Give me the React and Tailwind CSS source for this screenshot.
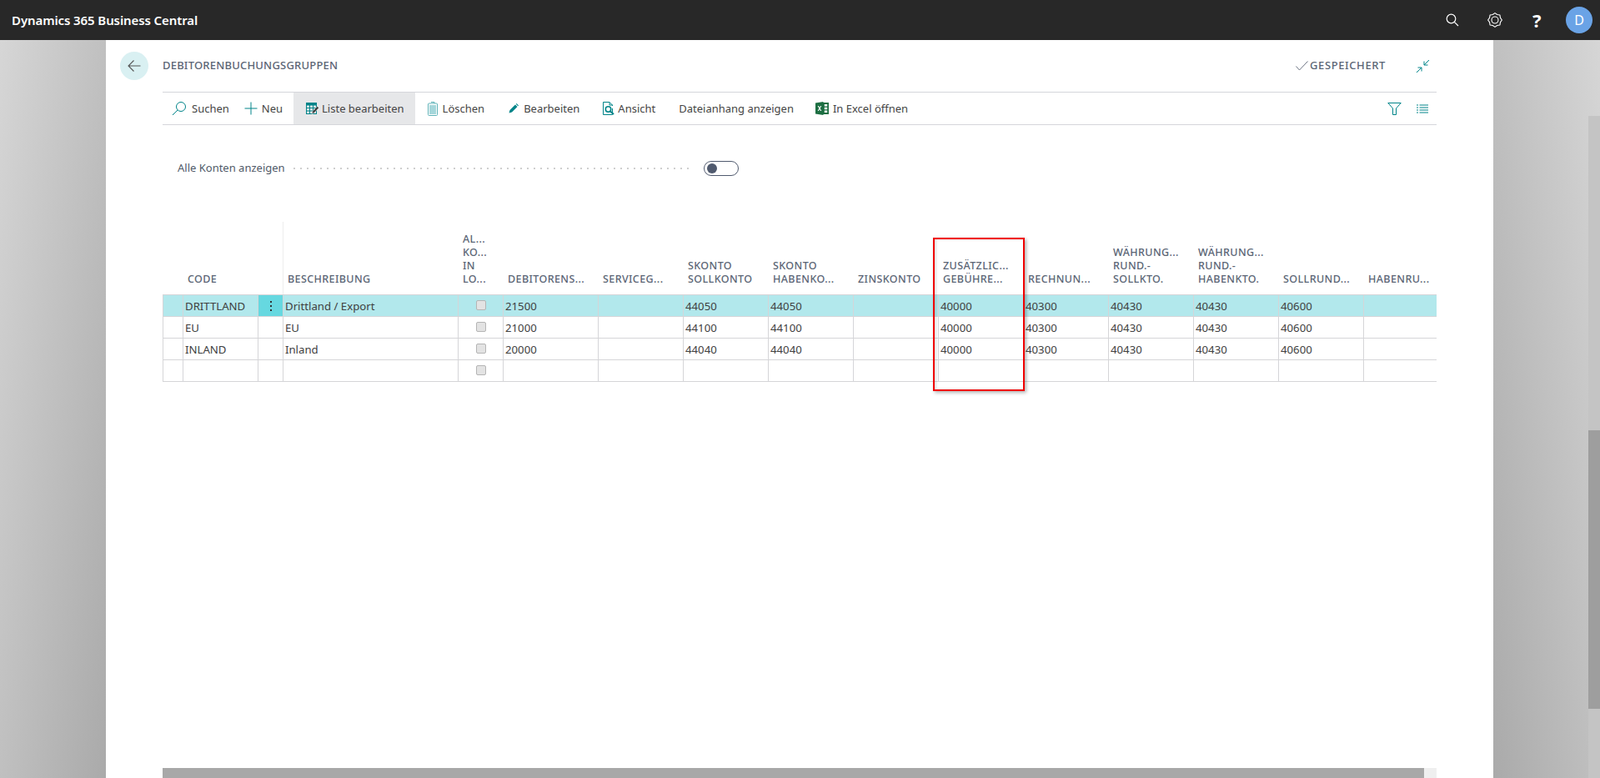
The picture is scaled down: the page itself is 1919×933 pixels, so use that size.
const teal = "#008489";

function SearchIcon() {
  return (
    <svg width="18" height="18" viewBox="0 0 18 18" fill="none" stroke={teal} strokeWidth="1">
      <circle cx="11" cy="7" r="5.5" />
      <path d="M7 11 L1 17" />
    </svg>
  );
}
function PlusIcon() {
  return (
    <svg width="16" height="16" viewBox="0 0 16 16" fill="none" stroke={teal} strokeWidth="1">
      <path d="M8 0.5 V15.5 M0.5 8 H15.5" />
    </svg>
  );
}
function EditListIcon() {
  return (
    <svg width="16" height="15" viewBox="0 0 16 15" fill="none">
      <rect x="0.5" y="0.5" width="12" height="13" fill="none" stroke={teal} />
      <rect x="0" y="0" width="13" height="3.5" fill={teal} />
      <path d="M0.5 6.5 H12 M0.5 10 H8 M4.5 3 V14 M8.5 3 V10" stroke={teal} />
      <path d="M7 13.5 L7.8 10.5 L13.5 4.5 L15.5 6.3 L9.8 12.5 Z" fill="#404040" stroke="#fff" strokeWidth="0.5" />
    </svg>
  );
}
function TrashIcon() {
  return (
    <svg width="12" height="18" viewBox="0 0 12 18" fill="none">
      <path d="M4 1.5 H8 V3" stroke="#5fb3b8" />
      <rect x="0.5" y="3" width="11" height="14.5" rx="1" stroke="#5fb3b8" />
      <rect x="2" y="5" width="8" height="11" fill="#a5d6da" />
    </svg>
  );
}
function PenIcon() {
  return (
    <svg width="12" height="12" viewBox="0 0 12 12" fill={teal}>
      <path d="M0.5 11.5 L1.5 8 L8 1.5 L10.5 4 L4 10.5 Z" />
      <path d="M8.8 0.8 L9.6 0 L12 2.4 L11.2 3.2 Z" />
    </svg>
  );
}
function ViewIcon() {
  return (
    <svg width="15" height="16" viewBox="0 0 15 16" fill="none" stroke={teal}>
      <path d="M11.5 8 V15.5 H0.5 V0.5 H8 L11.5 4 V5" />
      <path d="M8 0.5 V4 H11.5" />
      <circle cx="6.5" cy="9" r="3.2" strokeWidth="1.6" />
      <path d="M9 11.5 L13 15" strokeWidth="2" />
    </svg>
  );
}
function ExcelIcon() {
  return (
    <svg width="16" height="16" viewBox="0 0 16 16">
      <rect x="9" y="1" width="7" height="14" fill="#1d6f42" />
      <path d="M10.8 3 H14.2 V5.5 H10.8 Z M10.8 6.8 H14.2 V9.3 H10.8 Z M10.8 10.5 H14.2 V13 H10.8 Z" fill="#fff" />
      <path d="M0 1.5 L9.5 0 V16 L0 14.5 Z" fill="#1d6f42" />
      <path d="M2.7 5 L4 5 L5 7 L6.1 5 L7.3 5 L5.7 8 L7.3 11 L6 11 L5 9 L3.9 11 L2.7 11 L4.3 8 Z" fill="#fff" />
    </svg>
  );
}
function FilterIcon() {
  return (
    <svg width="17" height="15" viewBox="0 0 17 15" fill="none" stroke={teal}>
      <path d="M0.8 0.5 H16.2 L10.5 7 V14.5 H6.5 V7 Z" />
    </svg>
  );
}
function ListIcon() {
  return (
    <svg width="14" height="11" viewBox="0 0 14 11" fill="none" stroke={teal}>
      <path d="M0 1 H2 M3.5 1 H14 M0 4 H2 M3.5 4 H14 M0 7 H2 M3.5 7 H14 M0 10 H2 M3.5 10 H14" />
    </svg>
  );
}
function CollapseIcon() {
  return (
    <svg width="17" height="17" viewBox="0 0 17 17" fill="none" stroke={teal}>
      <path d="M16 1 L10 7 M10 2.5 V7 H14.5" />
      <path d="M1 16 L7 10 M2.5 10 H7 V14.5" />
    </svg>
  );
}
function GearIcon() {
  const pts = [];
  for (let i = 0; i < 16; i++) {
    const a = (i * Math.PI) / 8;
    const r = i % 2 === 0 ? 8.4 : 7;
    pts.push([9 + r * Math.cos(a), 9 + r * Math.sin(a)]);
  }
  let d = `M${pts[0][0].toFixed(2)} ${pts[0][1].toFixed(2)}`;
  for (let i = 1; i <= 16; i++) {
    const p = pts[i % 16];
    d += ` L${p[0].toFixed(2)} ${p[1].toFixed(2)}`;
  }
  return (
    <svg width="18" height="18" viewBox="0 0 18 18" fill="none" stroke="#fff" strokeWidth="1.1" strokeLinejoin="round">
      <path d={d + " Z"} />
      <circle cx="9" cy="9" r="4" />
    </svg>
  );
}

const tools = [
  { label: "Suchen", icon: <SearchIcon />, cls: "pl-[11px] pr-0 gap-[6px]" },
  { label: "Neu", icon: <PlusIcon />, cls: "pl-[18px] pr-[13px] gap-[5px]" },
  { label: "Liste bearbeiten", icon: <EditListIcon />, cls: "pl-[15px] pr-[13px] gap-[3px] bg-[#e6e7e9]" },
  { label: "Löschen", icon: <TrashIcon />, cls: "pl-[15px] pr-[14px] gap-[6px]" },
  { label: "Bearbeiten", icon: <PenIcon />, cls: "pl-[15px] pr-[14px] gap-[6px]" },
  { label: "Ansicht", icon: <ViewIcon />, cls: "pl-[14px] pr-[14px] gap-[3px]" },
  { label: "Dateianhang anzeigen", icon: null, cls: "pl-[14px] pr-[14px]" },
  { label: "In Excel öffnen", icon: <ExcelIcon />, cls: "pl-[12px] pr-[14px] gap-[5px]" },
];

const columns = [
  { w: "w-[25px]", lines: [] },
  { w: "w-[90px]", lines: ["CODE"] },
  { w: "w-[30px]", lines: [] },
  { w: "w-[210px]", lines: ["BESCHREIBUNG"] },
  { w: "w-[54px]", lines: ["AL...", "KO...", "IN", "LO..."] },
  { w: "w-[114px]", lines: ["DEBITORENS..."] },
  { w: "w-[102px]", lines: ["SERVICEG..."] },
  { w: "w-[102px]", lines: ["SKONTO", "SOLLKONTO"] },
  { w: "w-[102px]", lines: ["SKONTO", "HABENKO..."] },
  { w: "w-[102px]", lines: ["ZINSKONTO"] },
  { w: "w-[102px]", lines: ["ZUSÄTZLIC...", "GEBÜHRE..."] },
  { w: "w-[102px]", lines: ["RECHNUN..."] },
  { w: "w-[102px]", lines: ["WÄHRUNG...", "RUND.-", "SOLLKTO."] },
  { w: "w-[102px]", lines: ["WÄHRUNG...", "RUND.-", "HABENKTO."] },
  { w: "w-[102px]", lines: ["SOLLRUND..."] },
  { w: "w-[87px]", lines: ["HABENRU..."] },
];

const rows = [
  ["DRITTLAND", "Drittland / Export", "21500", "", "44050", "44050", "", "40000", "40300", "40430", "40430", "40600", ""],
  ["EU", "EU", "21000", "", "44100", "44100", "", "40000", "40300", "40430", "40430", "40600", ""],
  ["INLAND", "Inland", "20000", "", "44040", "44040", "", "40000", "40300", "40430", "40430", "40600", ""],
  ["", "", "", "", "", "", "", "", "", "", "", "", ""],
];

function Row({ row, selected }) {
  const values = [null, row[0], "menu", row[1], "check", ...row.slice(2)];
  return (
    <div className={`flex h-[26px] border-b border-[#d5d5d8] text-[13.2px] text-[#404040] ${selected ? "bg-[#b2e8ec] text-[#303030]" : ""}`}>
      {columns.map((c, i) => {
        const v = values[i];
        const last = i === columns.length - 1;
        return (
          <div key={i} className={`${c.w} shrink-0 h-full flex items-center pl-[2px] pt-[2px] whitespace-nowrap ${last ? "" : "border-r"} ${i === 0 ? "border-l" : ""} border-[#d5d5d8] ${selected && v === "menu" ? "bg-[#66d8e0]" : ""}`}>
            {v === "menu" ? (
              selected ? (
                <div className="w-full flex flex-col items-center gap-[3px] pr-[2px] -mt-[2px]">
                  <span className="w-[2px] h-[2px] bg-[#333]" />
                  <span className="w-[2px] h-[2px] bg-[#333]" />
                  <span className="w-[2px] h-[2px] bg-[#333]" />
                </div>
              ) : null
            ) : v === "check" ? (
              <div className="w-full flex justify-center pr-[2px] -mt-[3px]">
                <span className="block w-[12px] h-[12px] rounded-[2px] bg-[#e3e3e3] border border-[#b5b5b5]" />
              </div>
            ) : (
              v
            )}
          </div>
        );
      })}
    </div>
  );
}

export default function App() {
  return (
    <div className="relative h-[933px] w-full overflow-hidden flex flex-col font-['Open_Sans','Liberation_Sans',sans-serif]">
      <header className="h-[48px] shrink-0 bg-[#282828] flex items-center text-white">
        <div className="pl-[14px] text-[15px] font-semibold font-['Open_Sans',sans-serif] tracking-[-0.1px]">Dynamics 365 Business Central</div>
        <div className="ml-auto flex items-center">
          <svg width="16" height="16" viewBox="0 0 16 16" fill="none" stroke="#fff" strokeWidth="1.2">
            <circle cx="6.5" cy="6.5" r="5.3" />
            <path d="M10.3 10.3 L15 15" />
          </svg>
          <div className="ml-[34px]"><GearIcon /></div>
          <div className="ml-[36px] w-[10px] text-[22px] leading-none font-bold">?</div>
          <div className="ml-[30px] mr-[9px] w-[32px] h-[32px] rounded-full bg-[#6aa3e6] flex items-center justify-center text-[16px]">D</div>
        </div>
      </header>

      <div className="flex flex-1 min-h-0">
        <div className="w-[127px] shrink-0 bg-linear-to-br from-[#d6d6d6] to-[#aaaaaa]" />
        <main className="flex-1 min-w-0 bg-white flex flex-col pl-[17px] pr-[68px]">
          <div className="h-[62px] shrink-0 flex items-center">
            <div className="w-[34px] h-[34px] rounded-full bg-[#d9f0f2] flex items-center justify-center">
              <svg width="16" height="14" viewBox="0 0 16 14" fill="none" stroke="#555" strokeWidth="1.1">
                <path d="M15.5 7 H1 M7.5 0.5 L1 7 L7.5 13.5" />
              </svg>
            </div>
            <div className="ml-[17px] text-[13px] text-[#5b6575] font-medium font-['Roboto',sans-serif] tracking-[0.2px]">DEBITORENBUCHUNGSGRUPPEN</div>
            <div className="ml-auto flex items-center">
              <svg width="15" height="12" viewBox="0 0 15 12" fill="none" stroke="#6a7280" strokeWidth="1">
                <path d="M0.5 6.5 L4.5 11 L14.5 0.5" />
              </svg>
              <span className="ml-[2px] text-[13px] text-[#5b6575] font-medium font-['Roboto',sans-serif] tracking-[0.6px]">GESPEICHERT</span>
              <div className="ml-[36px] mr-[8px]"><CollapseIcon /></div>
            </div>
          </div>

          <div className="ml-[51px] h-[40px] shrink-0 border-y border-[#d5d6db] flex items-stretch text-[13px] text-[#444]">
            {tools.map((t) => (
              <div key={t.label} className={`flex items-center whitespace-nowrap ${t.cls}`}>
                {t.icon}
                <span className="pt-[2px]">{t.label}</span>
              </div>
            ))}
            <div className="ml-auto flex items-center gap-[18px] pr-[10px]">
              <FilterIcon />
              <ListIcon />
            </div>
          </div>

          <div className="ml-[69px] mt-[42px] h-[20px] shrink-0 flex items-center">
            <span className="text-[13px] text-[#505a68] whitespace-nowrap">Alle Konten anzeigen</span>
            <span className="ml-[7px] w-[482px] h-[4px] bg-[radial-gradient(circle,#cfcfcf_1px,transparent_1.2px)] bg-[length:8px_4px]" />
            <span className="ml-[13px] w-[42px] h-[18px] rounded-full border border-[#505a6e] flex items-center pl-[3px]">
              <span className="w-[12px] h-[12px] rounded-full bg-[#505a6e]" />
            </span>
          </div>

          <div className="relative ml-[51px] mt-[54px] w-[1528px] shrink-0">
            <div className="flex h-[88px] border-b border-[#d5d5d8] text-[12.5px] leading-[16px] text-[#5b6575] font-medium font-['Roboto',sans-serif] tracking-[0.4px]">
              {columns.map((c, i) => (
                <div key={i} className={`${c.w} shrink-0 flex flex-col justify-end pb-[10px] pl-[5px] whitespace-nowrap ${i === 2 ? "border-r border-[#ededed]" : ""}`}>
                  {c.lines.map((l) => (
                    <div key={l}>{l}</div>
                  ))}
                </div>
              ))}
            </div>
            {rows.map((r, i) => (
              <Row key={i} row={r} selected={i === 0} />
            ))}
            <div className="absolute left-[924px] top-[19px] w-[110px] h-[184px] border-2 border-[#f00000] shadow-[2px_2px_4px_rgba(0,0,0,0.3),inset_2px_0_3px_rgba(0,0,0,0.12)]" />
          </div>

          <div className="ml-[51px] mt-auto w-[1528px] h-[12px] shrink-0 bg-[#efefef]">
            <div className="w-[1513px] h-full bg-[#a8a8a8]" />
          </div>
        </main>
        <div className="w-[128px] shrink-0 bg-linear-to-bl from-[#d6d6d6] to-[#aaaaaa]" />
      </div>

      <div className="absolute right-0 top-[139px] bottom-0 w-[14px] bg-[#c4c4c4]">
        <div className="mt-[377px] h-[334px] bg-[#9e9e9e]" />
      </div>
    </div>
  );
}
